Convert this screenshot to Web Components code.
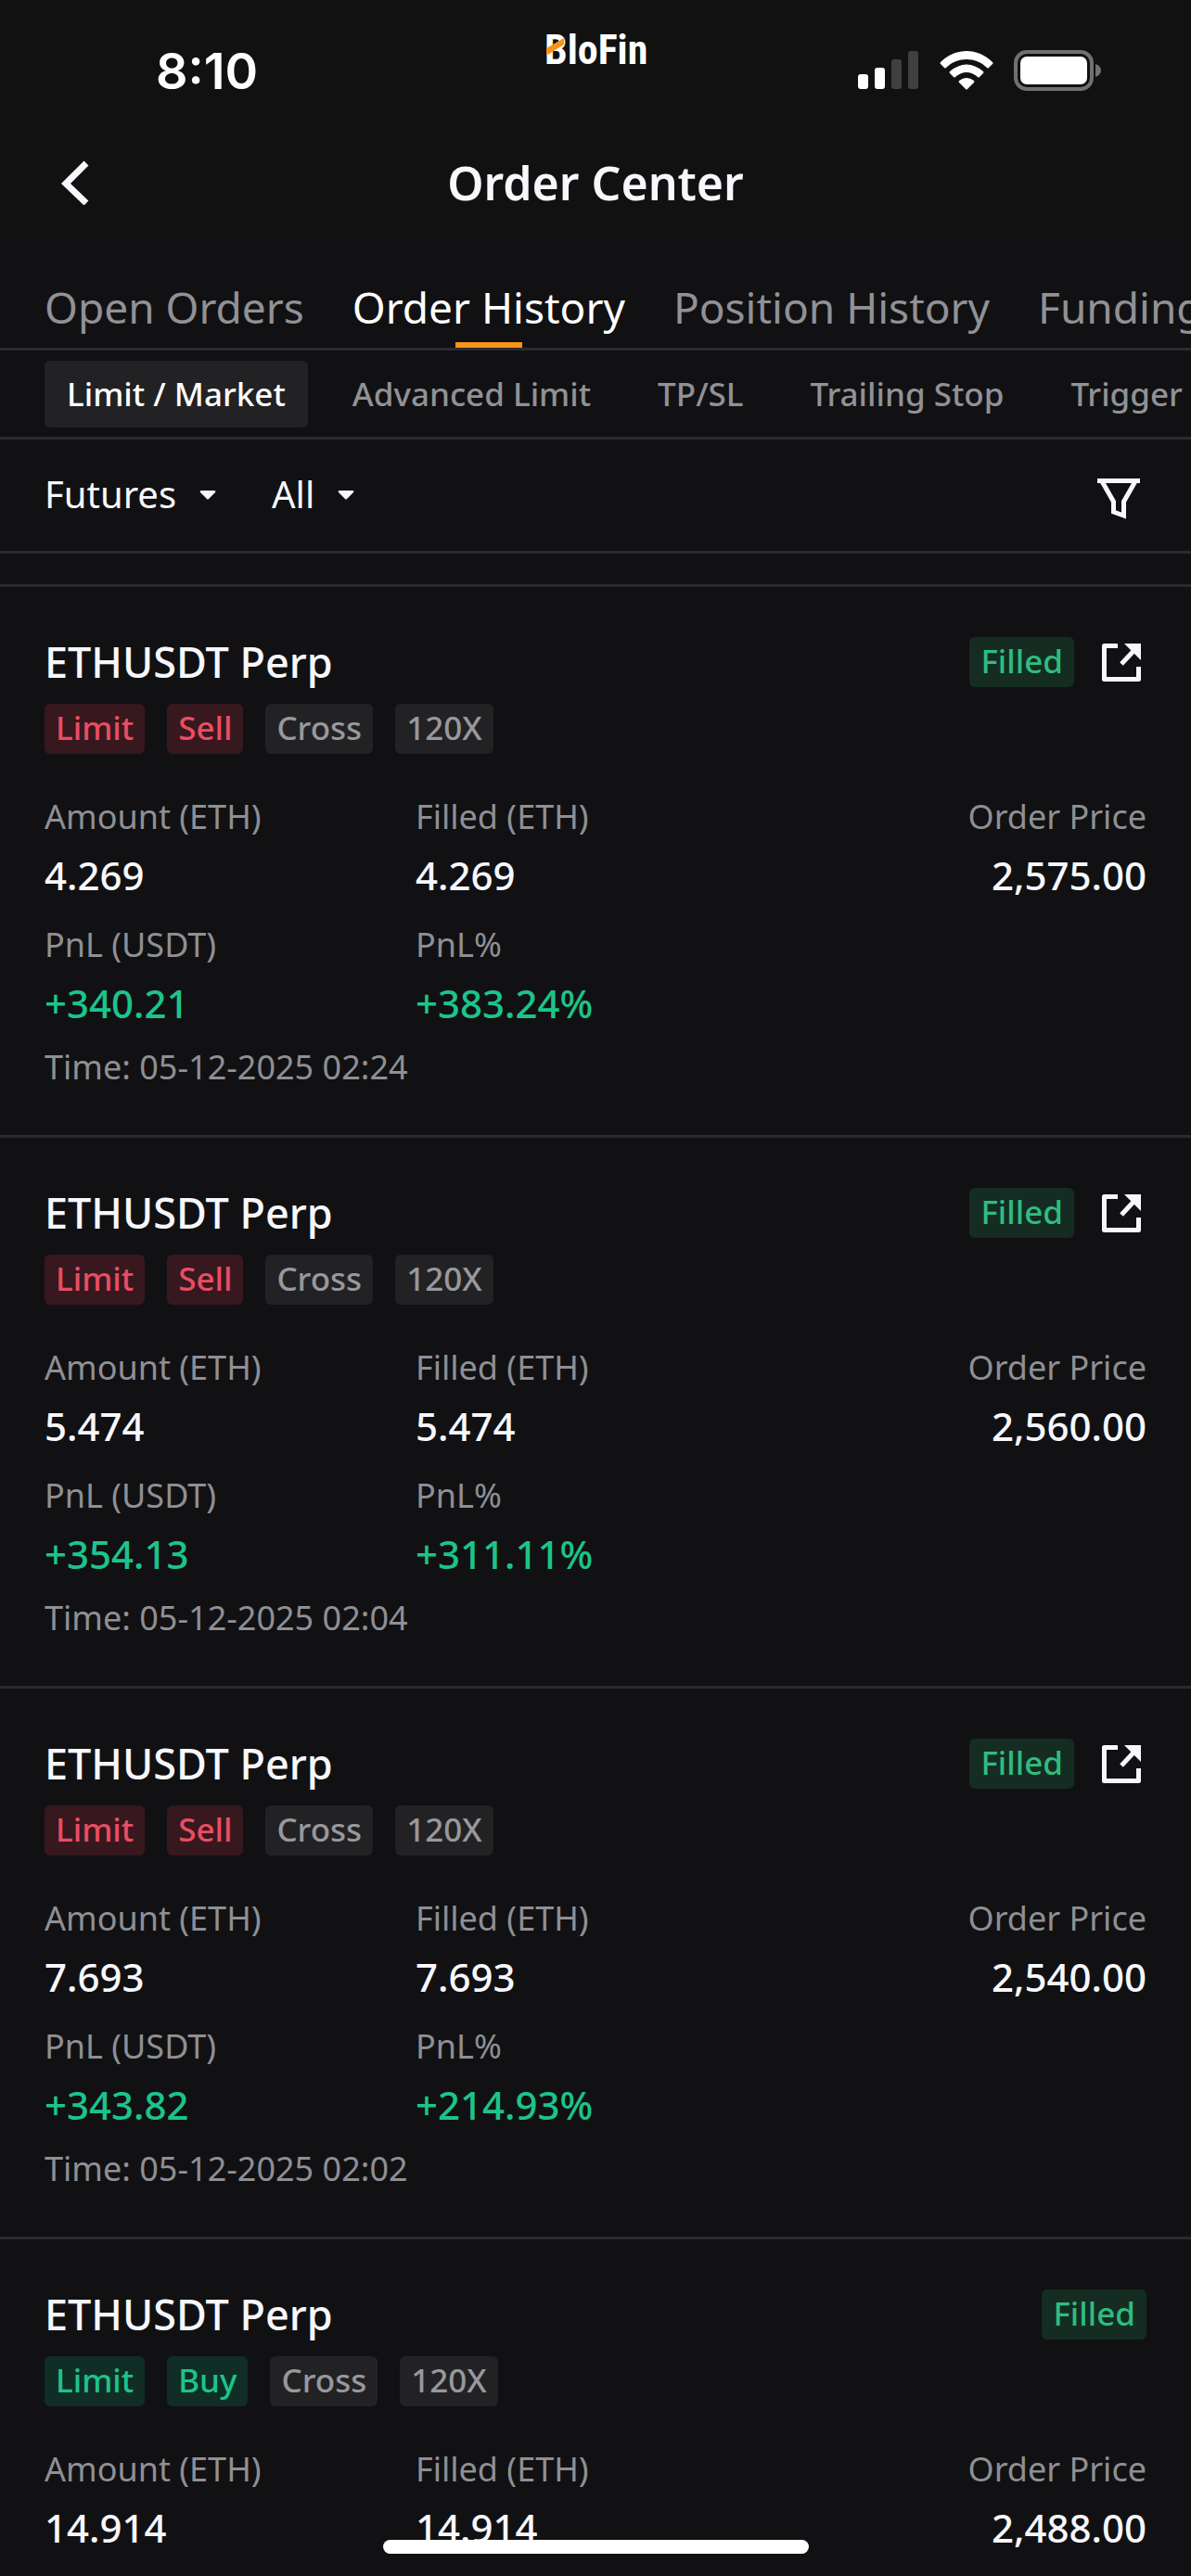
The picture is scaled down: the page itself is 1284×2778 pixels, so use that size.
<!DOCTYPE html>
<html lang="en">
<head>
<meta charset="utf-8">
<meta name="viewport" content="width=device-width, initial-scale=1">
<title>Order Center</title>
<style>
	body {
		margin: 0;
		background: #111113;
		font-family: "Noto Sans", sans-serif;
	}
</style>
</head>
<body>
<order-center></order-center>

<script>
const base = `
	* { box-sizing: border-box; }
	button, select {
		margin: 0;
		padding: 0;
		border: none;
		background: none;
		color: inherit;
		font: inherit;
		cursor: pointer;
	}
	svg { display: block; }
`

class BaseElement extends HTMLElement {
	constructor() {
		super()
		this.attachShadow({ mode: 'open' })
	}

	connectedCallback() {
		this.shadowRoot.innerHTML = `<style>${base}${this.styles()}</style>${this.markup()}`
	}
}

class StatusBar extends BaseElement {
	styles() {
		return `
			:host {
				display: grid;
				grid-template-columns: 1fr auto 1fr;
				height: 138px;
				padding: 0 96px;
				background: #111111;
				color: #ffffff;
			}
			.time {
				align-self: center;
				padding: 16px 0 0 72px;
				font: 600 54px/64px Inter, sans-serif;
			}
			.brand { margin-top: 24px; }
			.icons {
				display: flex;
				justify-content: flex-end;
				align-items: center;
				gap: 22px;
				padding-top: 14px;
			}
		`
	}

	markup() {
		return `
			<div class="time">8:10</div>
			<svg class="brand" width="112" height="56" viewBox="0 0 112 56" role="img" aria-label="BloFin">
				<text x="1" y="45" fill="#fff" font-family="'Roboto Condensed', 'Open Sans Condensed', 'Liberation Sans Narrow', sans-serif" font-weight="700" font-size="44">BloFin</text>
				<path d="M3 28 22 17v7L3 36z" fill="#f7931a"/>
			</svg>
			<div class="icons">
				<svg width="66" height="42" viewBox="0 0 66 42" fill="#fff">
					<rect x="0" y="25" width="11" height="16" rx="3"/>
					<rect x="18" y="18" width="11" height="23" rx="3"/>
					<rect x="36" y="9" width="11" height="32" rx="3" fill="#404040"/>
					<rect x="54" y="0" width="11" height="41" rx="3" fill="#404040"/>
				</svg>
				<svg width="58" height="42" viewBox="0 0 58 42" fill="#fff">
					<path d="M1 14Q0 13 1 12C17-4 41-4 57 12q1 1 0 2l-4 4q-1 1-2 0C39 6 19 6 7 18q-1 1-2 0z"/>
					<path d="M11 24q-1-1 0-2 18-15 36 0 1 1 0 2l-4 4q-1 1-2 0-12-10-24 0-1 1-2 0z"/>
					<path d="M21 34q-1-1 0-2 8-6 16 0 1 1 0 2l-7 7q-1 1-2 0z"/>
				</svg>
				<svg width="95" height="44" viewBox="0 0 95 44">
					<rect x="2" y="2" width="82" height="40" rx="12" fill="none" stroke="#707070" stroke-width="4"/>
					<rect x="7" y="7" width="72" height="30" rx="7" fill="#fff"/>
					<path d="M88 15q6 2 6 7t-6 7z" fill="#707070"/>
				</svg>
			</div>
		`
	}
}
customElements.define('status-bar', StatusBar)

class PageHeader extends BaseElement {
	styles() {
		return `
			:host {
				display: grid;
				grid-template-columns: 1fr auto 1fr;
				align-items: center;
				height: 117px;
				padding: 0 60px;
				background: #111111;
				color: #f7f7fc;
			}
			button { justify-self: start; }
			h1 {
				margin: 0;
				font-size: 50px;
				line-height: 64px;
				font-weight: 600;
			}
		`
	}

	markup() {
		return `
			<button aria-label="Back">
				<svg width="42" height="48" viewBox="0 0 42 48" fill="none" stroke="#f7f7fc" stroke-width="7">
					<path d="M33 3 11 25l22 21"/>
				</svg>
			</button>
			<h1><slot></slot></h1>
		`
	}
}
customElements.define('page-header', PageHeader)

class MainTabs extends BaseElement {
	styles() {
		return `
			:host {
				display: flex;
				gap: 52px;
				padding: 0 48px;
				overflow: hidden;
				border-bottom: 3px solid #2b2b2e;
				color: #919196;
			}
			button {
				position: relative;
				flex: none;
				padding: 48px 0 16px;
				font-size: 46px;
				line-height: 56px;
				white-space: nowrap;
			}
			.active { color: #ffffff; }
			.active::after {
				content: "";
				position: absolute;
				bottom: 0;
				left: calc(50% - 36px);
				width: 72px;
				height: 6px;
				background: #f7931a;
			}
		`
	}

	markup() {
		return `
			<button>Open Orders</button>
			<button class="active" aria-current="page">Order History</button>
			<button>Position History</button>
			<button>Funding</button>
		`
	}
}
customElements.define('main-tabs', MainTabs)

class TypeTabs extends BaseElement {
	styles() {
		return `
			:host {
				display: flex;
				gap: 24px;
				padding: 11px 48px 10px;
				overflow: hidden;
				border-bottom: 3px solid #2b2b2e;
				color: #919196;
			}
			button {
				flex: none;
				padding: 0 24px;
				border-radius: 6px;
				font-size: 35px;
				line-height: 72px;
				font-weight: 500;
				white-space: nowrap;
			}
			.active {
				background: #222224;
				color: #ffffff;
			}
		`
	}

	markup() {
		return `
			<button class="active" aria-current="true">Limit / Market</button>
			<button>Advanced Limit</button>
			<button>TP/SL</button>
			<button>Trailing Stop</button>
			<button>Trigger</button>
		`
	}
}
customElements.define('type-tabs', TypeTabs)

class FilterBar extends BaseElement {
	styles() {
		return `
			:host {
				display: flex;
				align-items: center;
				gap: 60px;
				height: 123px;
				padding: 0 48px;
				border-bottom: 3px solid #2b2b2e;
				color: #f7f7fc;
			}
			label {
				display: flex;
				align-items: center;
				gap: 24px;
			}
			select {
				appearance: none;
				padding-bottom: 3px;
				font-size: 40px;
				line-height: 56px;
			}
			button { margin-left: auto; }
		`
	}

	markup() {
		const caret = `<svg width="18" height="12" viewBox="0 0 18 12" fill="#f7f7fc"><path d="M2 1h14q2 0 1 2l-7 7q-1 1-2 0L1 3Q0 1 2 1z"/></svg>`
		return `
			<label><select aria-label="Product"><option>Futures</option></select>${caret}</label>
			<label><select aria-label="Side"><option>All</option></select>${caret}</label>
			<button aria-label="Filter">
				<svg width="60" height="60" viewBox="0 0 60 60" fill="none" stroke="#f7f7fc" stroke-width="5">
					<path d="M7 14.500h46M12 15l12.500 22v11l11 4V37L48 15"/>
				</svg>
			</button>
		`
	}
}
customElements.define('filter-bar', FilterBar)

class OrderTag extends BaseElement {
	styles() {
		return `
			:host {
				display: block;
				padding: 0 12px 2px;
				border-radius: 6px;
				background: #222224;
				color: #98989d;
				font-size: 35px;
				line-height: 52px;
				font-weight: 500;
				white-space: nowrap;
			}
			:host([tone="sell"]) { background: #36181e; color: #ea4d62; }
			:host([tone="buy"]) { background: #102e26; color: #1cc48a; }
			:host([tone="filled"]) { background: #152c23; color: #2ebd7f; }
		`
	}

	markup() {
		return '<slot></slot>'
	}
}
customElements.define('order-tag', OrderTag)

class OrderCard extends BaseElement {
	styles() {
		return `
			:host {
				display: block;
				padding: 54px 48px 49px;
				border-top: 3px solid #2b2b2e;
				color: #f7f7fc;
			}
			header, .tags {
				display: flex;
				align-items: center;
			}
			h2 {
				flex: 1;
				margin: 0;
				font-size: 45px;
				line-height: 54px;
				font-weight: 500;
			}
			header button { margin-left: 24px; }
			.tags {
				gap: 24px;
				margin: 18px 0 44px;
			}
			dl {
				display: grid;
				grid-template-columns: repeat(3, 1fr);
				gap: 21px 12px;
				margin: 0;
			}
			.price { text-align: right; }
			dt, .time {
				color: #8f8f94;
				font-size: 36px;
				line-height: 48px;
			}
			dd {
				margin: 9px 0 0;
				font-size: 42px;
				line-height: 60px;
				font-weight: 500;
			}
			.gain { color: #1cc48a; }
			.time { margin: 15px 0 0; }
		`
	}

	markup() {
		const { side, amount, price, pnl, rate, time } = this.dataset
		const tone = side.toLowerCase()
		const share = `
			<button aria-label="Share order">
				<svg width="54" height="54" viewBox="0 0 54 54" fill="none" stroke="#f7f7fc" stroke-width="5" stroke-linejoin="round">
					<path d="M23 9.500H8.500v36h37V32M27 29 42 13"/>
					<path d="M30 7h18v18z" fill="#f7f7fc" stroke="none"/>
				</svg>
			</button>`
		const result = `
			<div><dt>PnL (USDT)</dt><dd class="gain">${pnl}</dd></div>
			<div><dt>PnL%</dt><dd class="gain">${rate}</dd></div>`
		return `
			<header>
				<h2>ETHUSDT Perp</h2>
				<order-tag tone="filled">Filled</order-tag>
				${pnl ? share : ''}
			</header>
			<div class="tags">
				<order-tag tone="${tone}">Limit</order-tag>
				<order-tag tone="${tone}">${side}</order-tag>
				<order-tag>Cross</order-tag>
				<order-tag>120X</order-tag>
			</div>
			<dl>
				<div><dt>Amount (ETH)</dt><dd>${amount}</dd></div>
				<div><dt>Filled (ETH)</dt><dd>${amount}</dd></div>
				<div class="price"><dt>Order Price</dt><dd>${price}</dd></div>
				${pnl ? result : ''}
			</dl>
			${time ? `<p class="time">Time: ${time}</p>` : ''}
		`
	}
}
customElements.define('order-card', OrderCard)

class OrderCenter extends BaseElement {
	styles() {
		return `
			:host {
				position: relative;
				display: flex;
				flex-direction: column;
				height: 100vh;
				overflow: hidden;
				background: #111113;
			}
			:host > * { flex: none; }
			main {
				flex: 1;
				min-height: 0;
				padding-top: 33px;
				overflow: hidden;
			}
			.home {
				position: absolute;
				bottom: 24px;
				left: 50%;
				width: 459px;
				height: 15px;
				margin-left: -229px;
				border-radius: 8px;
				background: #ffffff;
			}
		`
	}

	markup() {
		return `
			<status-bar></status-bar>
			<page-header>Order Center</page-header>
			<main-tabs></main-tabs>
			<type-tabs></type-tabs>
			<filter-bar></filter-bar>
			<main>
				<order-card data-side="Sell" data-amount="4.269" data-price="2,575.00" data-pnl="+340.21" data-rate="+383.24%" data-time="05-12-2025 02:24"></order-card>
				<order-card data-side="Sell" data-amount="5.474" data-price="2,560.00" data-pnl="+354.13" data-rate="+311.11%" data-time="05-12-2025 02:04"></order-card>
				<order-card data-side="Sell" data-amount="7.693" data-price="2,540.00" data-pnl="+343.82" data-rate="+214.93%" data-time="05-12-2025 02:02"></order-card>
				<order-card data-side="Buy" data-amount="14.914" data-price="2,488.00"></order-card>
			</main>
			<div class="home"></div>
		`
	}
}
customElements.define('order-center', OrderCenter)
</script>
</body>
</html>
